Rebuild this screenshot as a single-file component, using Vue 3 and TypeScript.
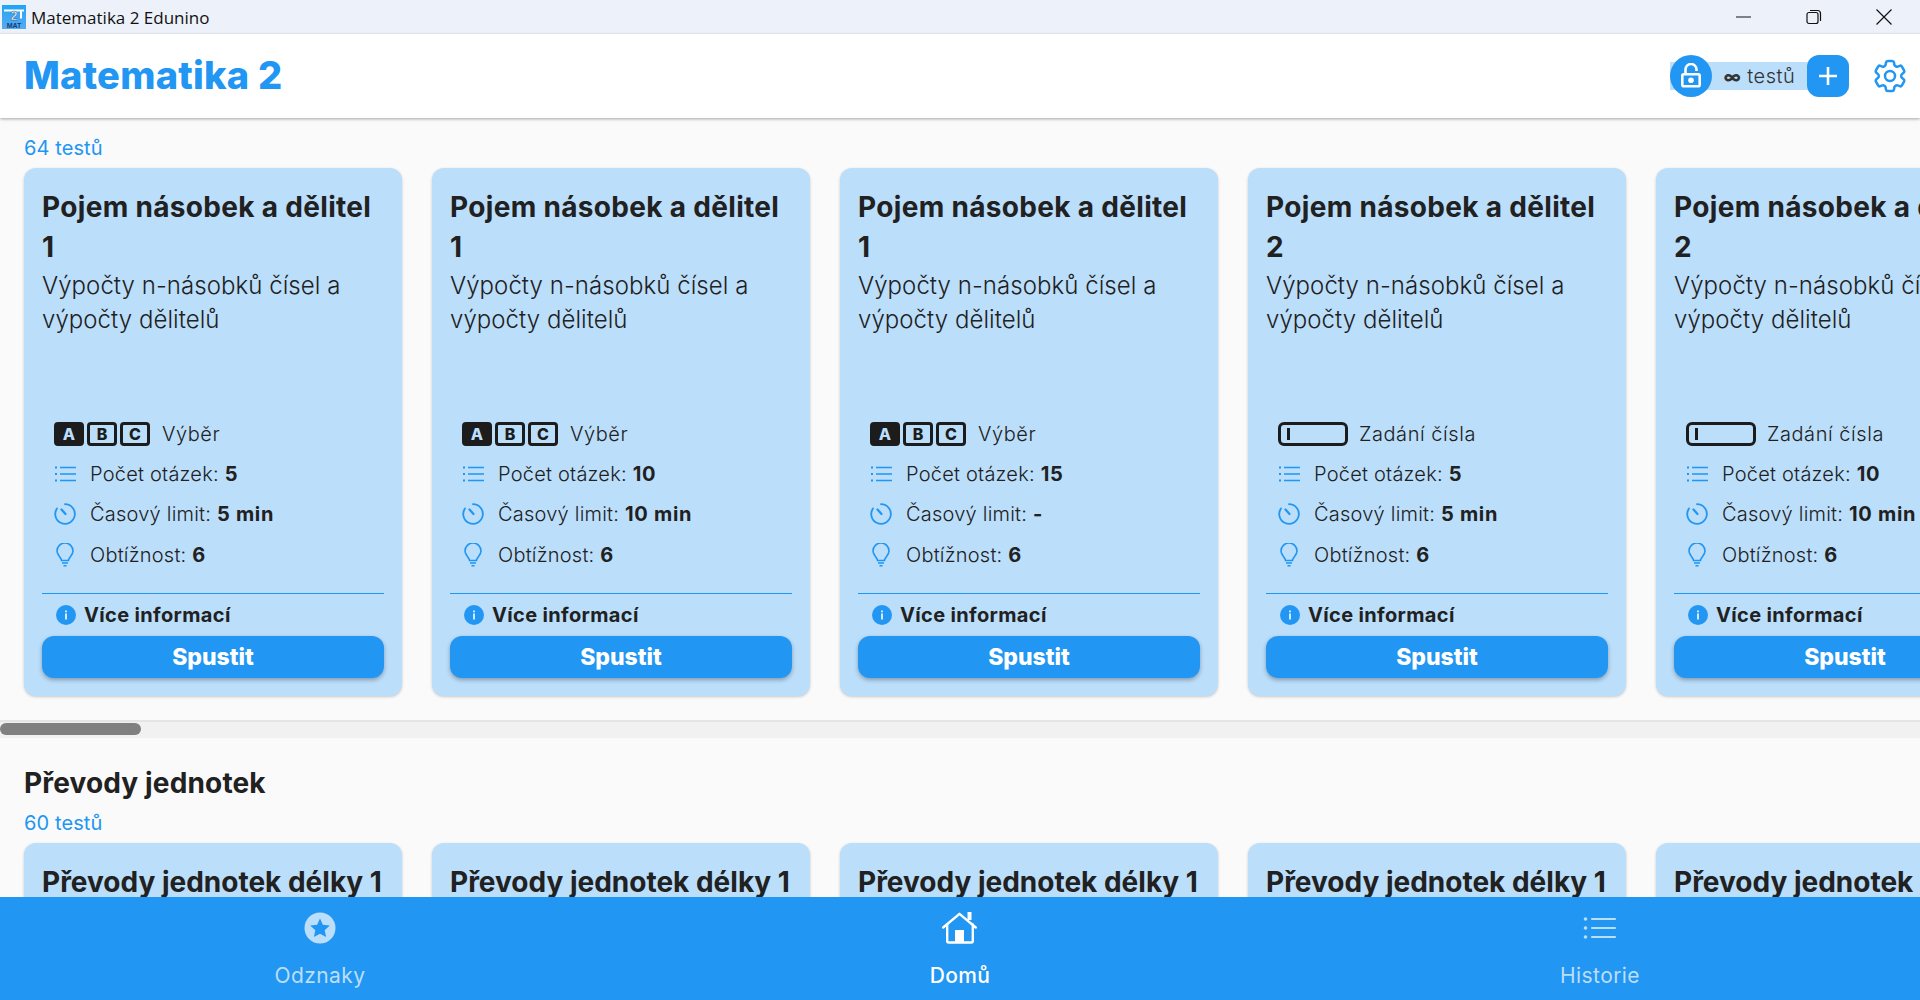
<script setup lang="ts">
interface Test {
  title: string
  num: string
  kind: 'abc' | 'input'
  count: number
  limit: string
}
const row1: Test[] = [
  { title: 'Pojem násobek a dělitel', num: '1', kind: 'abc', count: 5, limit: '5 min' },
  { title: 'Pojem násobek a dělitel', num: '1', kind: 'abc', count: 10, limit: '10 min' },
  { title: 'Pojem násobek a dělitel', num: '1', kind: 'abc', count: 15, limit: '-' },
  { title: 'Pojem násobek a dělitel', num: '2', kind: 'input', count: 5, limit: '5 min' },
  { title: 'Pojem násobek a dělitel', num: '2', kind: 'input', count: 10, limit: '10 min' },
]
const row2 = [0, 1, 2, 3, 4]
</script>

<template>
  <div class="app">
    <div class="titlebar">
      <svg class="logo" width="24" height="24" viewBox="0 0 24 24">
        <defs>
          <linearGradient id="lg" x1="0" y1="0" x2="0" y2="1">
            <stop offset="0" stop-color="#1fa5f6" />
            <stop offset="1" stop-color="#5aaaf0" />
          </linearGradient>
        </defs>
        <rect width="24" height="24" fill="url(#lg)" />
        <path d="M2 5.500h20" stroke="#fff" stroke-width="2" />
        <path d="M19 5.500v8" stroke="#fff" stroke-width="2" />
        <text x="12" y="14.500" text-anchor="middle" class="logo-two">2</text>
        <text x="12" y="22.500" text-anchor="middle" class="logo-text">MAT</text>
      </svg>
      <span class="win-title">Matematika 2 Edunino</span>
      <div class="win-btns">
        <svg width="16" height="16" viewBox="0 0 16 16"><path d="M0 8h15" stroke="#111" stroke-width="1" /></svg>
        <svg width="16" height="16" viewBox="0 0 16 16" fill="none" stroke="#111" stroke-width="1.200"><rect x="1" y="3.500" width="11" height="11" rx="2" /><path d="M4 1.500h7.500a3 3 0 0 1 3 3V12" /></svg>
        <svg width="16" height="16" viewBox="0 0 16 16"><path d="M.5.5l15 15M15.500.5l-15 15" stroke="#111" stroke-width="1.200" /></svg>
      </div>
    </div>

    <header class="header">
      <h1 class="brand">Matematika 2</h1>
      <div class="tests-pill">
        <span class="lock">
          <svg width="26" height="26" viewBox="0 0 26 26" fill="none" stroke="#fff" stroke-width="2.600">
            <rect x="4.300" y="11.300" width="17.400" height="12" rx="1.500" />
            <path d="M7.500 11V6.500a5.500 5.500 0 0 1 11 0V8" />
            <circle cx="13" cy="17.300" r="2.800" fill="#fff" stroke="none" />
          </svg>
        </span>
        <span class="pill-label"><b class="inf">∞</b> testů</span>
        <span class="plus">
          <svg width="20" height="20" viewBox="0 0 20 20"><path d="M10 1v18M1 10h18" stroke="#fff" stroke-width="2.600" /></svg>
        </span>
      </div>
      <svg class="gear" width="40" height="40" viewBox="0 0 24 24" fill="none" stroke="#2196f3" stroke-width="1.500">
        <path d="M9.594 3.940c.09-.542.56-.94 1.110-.94h2.593c.55 0 1.020.398 1.110.94l.213 1.281c.063.374.313.686.645.87.074.04.147.083.22.127.325.196.72.257 1.075.124l1.217-.456a1.125 1.125 0 0 1 1.370.49l1.296 2.247a1.125 1.125 0 0 1-.26 1.431l-1.003.827c-.293.241-.438.613-.43.992a7.723 7.723 0 0 1 0 .255c-.008.378.137.75.43.991l1.004.827c.424.35.534.955.26 1.430l-1.298 2.247a1.125 1.125 0 0 1-1.369.491l-1.217-.456c-.355-.133-.75-.072-1.076.124a6.470 6.470 0 0 1-.22.128c-.331.183-.581.495-.644.869l-.213 1.281c-.09.543-.56.94-1.110.94h-2.594c-.55 0-1.019-.398-1.110-.94l-.213-1.281c-.062-.374-.312-.686-.644-.87a6.520 6.520 0 0 1-.22-.127c-.325-.196-.72-.257-1.076-.124l-1.217.456a1.125 1.125 0 0 1-1.369-.49l-1.297-2.247a1.125 1.125 0 0 1 .26-1.431l1.004-.827c.292-.24.437-.613.43-.991a6.932 6.932 0 0 1 0-.255c.007-.38-.138-.751-.43-.992l-1.004-.827a1.125 1.125 0 0 1-.26-1.430l1.297-2.247a1.125 1.125 0 0 1 1.370-.491l1.216.456c.356.133.751.072 1.076-.124.072-.044.146-.086.22-.128.332-.183.582-.495.644-.869l.214-1.280z" />
        <circle cx="12" cy="12" r="3" />
      </svg>
    </header>

    <main class="content">
      <div class="count">64 testů</div>
      <div class="cards">
        <article v-for="(t, i) in row1" :key="i" class="card">
          <h3 class="card-title">{{ t.title }} {{ t.num }}</h3>
          <p class="card-desc">Výpočty n-násobků čísel a výpočty dělitelů</p>
          <div class="meta">
            <div class="kind">
              <span v-if="t.kind === 'abc'" class="abc">
                <i class="key on">A</i><i class="key">B</i><i class="key">C</i>
              </span>
              <span v-else class="input-box"><i class="caret"></i></span>
              <span class="kind-label">{{ t.kind === 'abc' ? 'Výběr' : 'Zadání čísla' }}</span>
            </div>
            <div class="row">
              <svg class="ic" width="22" height="22" viewBox="0 0 22 22" fill="none" stroke="#2196f3" stroke-width="1.600">
                <path d="M6 4.500h16M6 11h16M6 17.500h16" />
                <path d="M1 4.500h2M1 11h2M1 17.500h2" stroke-width="1.800" />
              </svg>
              <span>Počet otázek: <b>{{ t.count }}</b></span>
            </div>
            <div class="row">
              <svg class="ic" width="22" height="22" viewBox="0 0 22 22" fill="none" stroke="#2196f3" stroke-width="1.800" stroke-linecap="round">
                <path d="M11 1.200a9.800 9.800 0 1 1-8 4.200" />
                <path d="M7.500 6.500l4 4.500" stroke-width="2.200" />
              </svg>
              <span>Časový limit: <b>{{ t.limit }}</b></span>
            </div>
            <div class="row">
              <svg class="ic" width="22" height="24" viewBox="0 0 22 24" fill="none" stroke="#2196f3" stroke-width="1.600">
                <path d="M7.500 17.500c0-3-4.500-5-4.500-9.500a8 8 0 0 1 16 0c0 4.500-4.500 6.500-4.500 9.500z" />
                <path d="M8 20h6M9.500 22.800h3" />
              </svg>
              <span>Obtížnost: <b>6</b></span>
            </div>
          </div>
          <div class="more">
            <svg width="20" height="20" viewBox="0 0 20 20">
              <circle cx="10" cy="10" r="10" fill="#2196f3" />
              <rect x="9.200" y="8.500" width="1.600" height="6" fill="#fff" />
              <rect x="9.200" y="5.500" width="1.600" height="1.800" fill="#fff" />
            </svg>
            <span>Více informací</span>
          </div>
          <button class="start">Spustit</button>
        </article>
      </div>
      <div class="scroll-track"><div class="scroll-thumb"></div></div>
      <h2 class="section">Převody jednotek</h2>
      <div class="count second">60 testů</div>
      <div class="cards">
        <article v-for="i in row2" :key="i" class="card card-clip">
          <h3 class="card-title">Převody jednotek délky 1</h3>
        </article>
      </div>
    </main>

    <nav class="nav">
      <div class="nav-item">
        <span class="nav-icon">
          <svg width="32" height="32" viewBox="0 0 32 32">
            <circle cx="16" cy="16" r="15.500" fill="#bbdefb" />
            <path d="M16 6.500l2.900 6.300 6.900.8-5.100 4.700 1.400 6.800-6.100-3.400-6.100 3.400 1.400-6.800-5.100-4.700 6.900-.8z" fill="#2196f3" />
          </svg>
        </span>
        <span class="nav-label">Odznaky</span>
      </div>
      <div class="nav-item active">
        <span class="nav-icon">
          <svg width="36" height="32" viewBox="0 0 36 32" fill="none" stroke="#fff" stroke-width="2.400" stroke-linejoin="round" stroke-linecap="round">
            <path d="M1.200 15.500L17.500 1.800l16.300 13.700" />
            <path d="M5.200 12.500v16.500a1.500 1.500 0 0 0 1.500 1.500h22.600a1.500 1.500 0 0 0 1.500-1.500V12.500" />
            <path d="M27.500 8V0" stroke-linecap="butt" stroke-width="4" />
            <rect x="13" y="18" width="9" height="13" fill="#fff" stroke="none" />
          </svg>
        </span>
        <span class="nav-label">Domů</span>
      </div>
      <div class="nav-item">
        <span class="nav-icon">
          <svg width="34" height="26" viewBox="0 0 34 26" fill="none" stroke="#bbdefb" stroke-width="2.200" stroke-linecap="round">
            <path d="M9 4h23M9 13h23M9 22h23" />
            <circle cx="2.500" cy="4" r="1.800" fill="#bbdefb" stroke="none" />
            <circle cx="2.500" cy="13" r="1.800" fill="#bbdefb" stroke="none" />
            <circle cx="2.500" cy="22" r="1.800" fill="#bbdefb" stroke="none" />
          </svg>
        </span>
        <span class="nav-label">Historie</span>
      </div>
    </nav>
  </div>
</template>

<style scoped>
.app {
  width: 1920px;
  height: 1000px;
  display: flex;
  flex-direction: column;
  overflow: hidden;
  background: #fafafa;
  color: #212121;
  font-family: Inter, "Noto Sans", sans-serif;
}
.titlebar {
  height: 34px;
  flex: none;
  display: flex;
  align-items: center;
  background: #edf2fa;
  padding-left: 2px;
}
.logo-text {
  font: 700 7px "Liberation Sans", sans-serif;
  fill: #123e78;
}
.logo-two {
  font: 700 12px "Liberation Sans", sans-serif;
  fill: #fff;
  stroke: #123e78;
  stroke-width: 0.4px;
}
.win-title {
  margin-left: 5px;
  font: 400 17px "Open Sans", "Noto Sans", sans-serif;
  color: #111;
}
.win-btns {
  margin-left: auto;
  display: flex;
  gap: 54px;
  padding-right: 28px;
}
.header {
  height: 84px;
  flex: none;
  display: flex;
  align-items: center;
  padding: 0 10px 0 24px;
  background: #fff;
  box-shadow: 0 1px 3px rgba(0, 0, 0, 0.35);
  position: relative;
  z-index: 1;
}
.brand {
  margin: 0 0 2px;
  font-size: 38px;
  letter-spacing: 0.25px;
  font-weight: 800;
  color: #2196f3;
}
.tests-pill {
  margin-left: auto;
  display: flex;
  align-items: center;
  background: linear-gradient(#bbdefb, #bbdefb) center / 100% 28px no-repeat;
}
.lock {
  width: 42px;
  height: 42px;
  border-radius: 50%;
  background: #2196f3;
  display: flex;
  align-items: center;
  justify-content: center;
}
.pill-label {
  width: 95px;
  text-align: center;
  font-size: 20px;
  font-weight: 300;
  letter-spacing: 0.5px;
  color: #333;
}
.inf {
  font-size: 17px;
  font-weight: 800;
}
.plus {
  width: 42px;
  height: 42px;
  border-radius: 12px;
  background: #2196f3;
  display: flex;
  align-items: center;
  justify-content: center;
}
.gear {
  margin-left: 21px;
}
.content {
  flex: 1;
  min-height: 0;
  overflow: hidden;
}
.count {
  margin: 18px 0 0 24px;
  height: 32px;
  line-height: 24px;
  font-size: 20px;
  letter-spacing: 0.1px;
  color: #2196f3;
}
.count.second {
  margin-top: 8px;
}
.cards {
  display: flex;
  gap: 30px;
  padding-left: 24px;
}
.card {
  flex: none;
  width: 378px;
  height: 528px;
  box-sizing: border-box;
  padding: 19px 18px 18px;
  display: flex;
  flex-direction: column;
  border-radius: 12px;
  background: #bbdefb;
  box-shadow: 0 1px 3px rgba(0, 0, 0, 0.2);
}
.card-title {
  margin: 0;
  font-size: 28px;
  line-height: 40px;
  font-weight: 700;
  letter-spacing: 0.32px;
}
.card-clip .card-title {
  letter-spacing: 0;
}
.card-desc {
  margin: 2px 0 0;
  font-size: 24px;
  line-height: 34px;
  font-weight: 300;
  letter-spacing: 0.05px;
}
.meta {
  margin-top: auto;
  padding: 0 0 18px 12px;
  border-bottom: 1px solid #2196f3;
}
.kind {
  display: flex;
  align-items: center;
  height: 40px;
  gap: 12px;
  font-size: 20px;
  font-weight: 300;
}
.kind-label {
  letter-spacing: 0.55px;
}
.abc {
  display: flex;
  gap: 3px;
}
.key {
  width: 30px;
  height: 24px;
  box-sizing: border-box;
  border: 3px solid #1c1c1c;
  border-radius: 4px;
  font: 800 16px/18px Inter, sans-serif;
  text-align: center;
  color: #1c1c1c;
}
.key.on {
  background: #1c1c1c;
  color: #bbdefb;
}
.input-box {
  width: 70px;
  height: 24px;
  box-sizing: border-box;
  border: 3px solid #1c1c1c;
  border-radius: 6px;
  display: flex;
  align-items: center;
  padding-left: 6px;
  margin-right: -1px;
}
.caret {
  width: 3px;
  height: 12px;
  background: #1c1c1c;
}
.row {
  display: flex;
  align-items: center;
  height: 40.500px;
  gap: 14px;
  font-size: 20px;
  font-weight: 300;
  letter-spacing: 0.22px;
}
.row b {
  font-weight: 700;
  letter-spacing: 0.7px;
}
.ic {
  flex: none;
}
.more {
  display: flex;
  align-items: center;
  gap: 8px;
  height: 42px;
  padding-left: 14px;
  font-size: 20px;
  font-weight: 700;
  letter-spacing: 0.35px;
}
.start {
  height: 42px;
  flex: none;
  border: 0;
  border-radius: 12px;
  background: #2196f3;
  color: #fff;
  font: 800 23px Inter, sans-serif;
  box-shadow: 0 2px 4px rgba(0, 0, 0, 0.3);
}
.scroll-track {
  margin-top: 24px;
  height: 15px;
  padding-top: 1px;
  border-top: 2px solid #e5e5e5;
  background: #f1f1f1;
}
.scroll-thumb {
  width: 141px;
  height: 12px;
  border-radius: 6px;
  background: #808080;
}
.section {
  margin: 25px 0 0 24px;
  font-size: 28px;
  line-height: 40px;
  font-weight: 700;
  letter-spacing: 0.15px;
}
.nav {
  height: 103px;
  flex: none;
  display: grid;
  grid-template-columns: repeat(3, 1fr);
  background: #2196f3;
  position: relative;
}
.nav-item {
  display: flex;
  flex-direction: column;
  align-items: center;
  padding-top: 15px;
  color: #bbdefb;
  font-size: 21px;
  letter-spacing: 0.4px;
}
.nav-icon {
  height: 32px;
  display: flex;
  align-items: center;
}
.nav-label {
  margin-top: 19px;
}
.nav-item.active {
  color: #fff;
  font-weight: 500;
}
</style>
